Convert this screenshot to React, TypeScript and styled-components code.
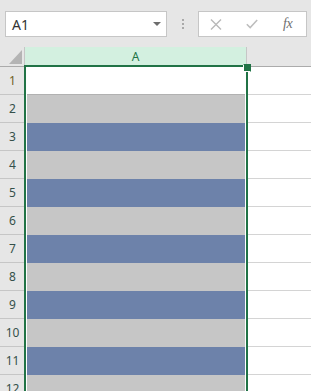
import React from 'react'
import styled, { createGlobalStyle } from 'styled-components'

const GlobalStyle = createGlobalStyle`
  html, body {
    margin: 0;
    padding: 0;
    background: #ffffff;
    font-family: "Noto Sans", "Liberation Sans", Arial, sans-serif;
  }
  * { box-sizing: border-box; }
`

const ROWS = 13

const Page = styled.div`
  width: 311px;
  height: 391px;
  overflow: hidden;
  background: #ffffff;
`

const Toolbar = styled.div`
  display: flex;
  align-items: flex-start;
  height: 47px;
  padding: 11px 4px 0 5px;
  background: #e6e6e6;
`

const NameBox = styled.div`
  position: relative;
  display: flex;
  align-items: center;
  width: 162px;
  height: 26px;
  padding-left: 6px;
  background: #ffffff;
  border: 1px solid #c6c6c6;
  font-size: 14px;
  color: #333333;
`

const DropArrow = styled.span`
  margin-left: auto;
  margin-right: 5px;
  width: 0;
  height: 0;
  border-left: 4px solid transparent;
  border-right: 4px solid transparent;
  border-top: 4px solid #6d6d6d;
`

const Grip = styled.div`
  display: flex;
  flex-direction: column;
  align-items: center;
  justify-content: center;
  gap: 2px;
  width: 31px;
  height: 26px;
`

const Dot = styled.span`
  width: 2px;
  height: 2px;
  background: #a9a9a9;
`

const FormulaBox = styled.div`
  display: flex;
  align-items: center;
  flex: 1;
  height: 26px;
  padding-left: 11px;
  background: #ffffff;
  border: 1px solid #c6c6c6;
`

const IconSlot = styled.span<{ $w: number }>`
  display: flex;
  align-items: center;
  justify-content: center;
  width: ${(p) => p.$w}px;
`

const Fx = styled.span`
  font-family: "Liberation Serif", "Times New Roman", serif;
  font-style: italic;
  font-size: 14px;
  color: #6f6f6f;
  letter-spacing: -0.5px;
`

const Sheet = styled.div`
  position: relative;
  display: grid;
  grid-template-columns: 25px 222px 1fr;
  grid-auto-rows: 28px;
  grid-template-rows: 20px;
`

const Corner = styled.div`
  display: flex;
  align-items: flex-end;
  justify-content: flex-end;
  padding: 0 2px 2px 0;
  background: #e6e6e6;
  border-bottom: 1px solid #ababab;
  border-right: 1px solid #c6c6c6;
`

const Triangle = styled.span`
  width: 0;
  height: 0;
  border-left: 13px solid transparent;
  border-bottom: 14px solid #b4b4b4;
`

const ColHead = styled.div<{ $active?: boolean }>`
  display: flex;
  align-items: center;
  justify-content: center;
  font-size: 12px;
  color: ${(p) => (p.$active ? '#217346' : '#444444')};
  background: ${(p) => (p.$active ? '#d3f0e0' : '#e6e6e6')};
  border-bottom: 1px solid #ababab;
  border-right: ${(p) => (p.$active ? '1px solid #c6c6c6' : 'none')};
`

const RowHead = styled.div<{ $active?: boolean }>`
  display: flex;
  align-items: center;
  justify-content: center;
  padding-left: 1px;
  font-size: 12px;
  color: ${(p) => (p.$active ? '#6f6226' : '#35504a')};
  background: #e6e6e6;
  border-bottom: 1px solid #c6c6c6;
  border-right: 1px solid #c6c6c6;
`

const Cell = styled.div<{ $fill: string; $line: string }>`
  background: ${(p) => p.$fill};
  border-bottom: 1px solid ${(p) => p.$line};
`

const Blank = styled.div`
  background: #ffffff;
  border-bottom: 1px solid #d4d4d4;
`

const Selection = styled.div`
  position: absolute;
  left: 24px;
  top: 18px;
  width: 224px;
  height: 400px;
  border: 2px solid #217346;
  border-bottom: none;
  box-shadow: inset 0 0 0 1px #ffffff;
  pointer-events: none;
`

const FillHandle = styled.div`
  position: absolute;
  left: 243px;
  top: 17px;
  width: 8px;
  height: 8px;
  background: #217346;
  border: 1px solid #ffffff;
  border-top-color: transparent;
  border-right-color: transparent;
`

function cellColors(row: number) {
  if (row === 1) return { fill: '#ffffff', line: '#b1b1b1' }
  if (row % 2 === 0) return { fill: '#c6c6c6', line: '#c6c6c6' }
  return { fill: '#6d82aa', line: '#6d82aa' }
}

export default function App() {
  const rows = Array.from({ length: ROWS }, (_, i) => i + 1)

  return (
    <Page>
      <GlobalStyle />
      <Toolbar>
        <NameBox>
          A1
          <DropArrow />
        </NameBox>
        <Grip>
          <Dot />
          <Dot />
          <Dot />
        </Grip>
        <FormulaBox>
          <IconSlot $w={12}>
            <svg width="12" height="11" viewBox="0 0 12 11">
              <path d="M1 0.5 L11 10.5 M11 0.5 L1 10.5" stroke="#b9b9b9" strokeWidth="1.4" fill="none" />
            </svg>
          </IconSlot>
          <IconSlot $w={24} />
          <IconSlot $w={12}>
            <svg width="12" height="10" viewBox="0 0 12 10">
              <path d="M0.8 5.2 L4.2 8.6 L11.2 1" stroke="#bdbdbd" strokeWidth="1.5" fill="none" />
            </svg>
          </IconSlot>
          <IconSlot $w={25} />
          <Fx>fx</Fx>
        </FormulaBox>
      </Toolbar>
      <Sheet>
        <Corner>
          <Triangle />
        </Corner>
        <ColHead $active>A</ColHead>
        <ColHead />
        {rows.map((r) => {
          const c = cellColors(r)
          return (
            <React.Fragment key={r}>
              <RowHead $active={r === 1}>{r}</RowHead>
              <Cell $fill={c.fill} $line={c.line} />
              <Blank />
            </React.Fragment>
          )
        })}
        <Selection />
        <FillHandle />
      </Sheet>
    </Page>
  )
}
